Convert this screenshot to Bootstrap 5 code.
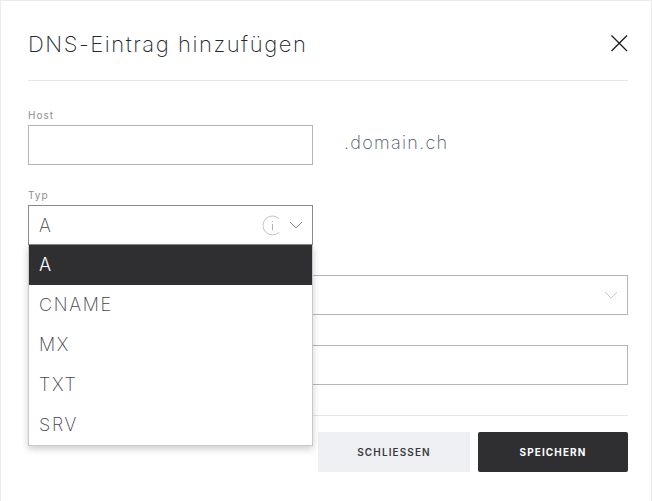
<!DOCTYPE html>
<html lang="de">
<head>
<meta charset="utf-8">
<title>DNS-Eintrag hinzufügen</title>
<link rel="stylesheet" href="https://cdn.jsdelivr.net/npm/bootstrap@5.3.0/dist/css/bootstrap.min.css">
<style>
html,body{height:100%;background:#fff;overflow:hidden}
body{font-family:Inter,"Liberation Sans",sans-serif;font-weight:300;color:#3a3a3d}
.dlg{height:501px;width:652px;border:solid #ebebeb;border-width:1px 1px 0 1px;padding:0 23px 0 27px}
.dlg-head{height:80px;border-bottom:1px solid #e6e6e6}
.dlg-title{font-size:22px;font-weight:200;letter-spacing:1.55px;color:#23262c;margin:7px 0 0;line-height:1.2}
.dlg-close{width:18px;height:18px;padding:0;border:0;background:none;display:block;margin-top:-4px}
.dlg-body{height:335px;border-bottom:1px solid #e6e6e6;position:relative;padding-top:29px}
.fld-label{display:block;font-size:10px;letter-spacing:1px;color:#8d8d8d;font-weight:400;height:15px;line-height:10px;margin:0}
.fld{height:40px;border:1px solid #b5b5b5;border-radius:0;background:#fff;box-shadow:none;padding:0 9px 0 10px}
.fld-narrow{width:285px}
.group-host{margin-bottom:25px}
.group-plain{margin-bottom:15px}
.domain-text{font-size:18px;font-weight:200;letter-spacing:1.3px;color:#4a5560;margin-left:31px;margin-top:-6px}
.sel-open{border-color:#8a8a8a;font-size:18px;font-weight:200;color:#444}
.sel-value{padding-top:1px}
.info-icon{width:21px;height:21px;display:block;margin-right:6px}
.chev{width:14px;height:8px;display:block}
.opt-menu{position:absolute;left:0;top:164px;width:285px;min-width:0;padding:0;margin:0;display:block;border:1px solid #c9c9c9;border-top:0;border-radius:0;box-shadow:0 3px 7px rgba(0,0,0,.2);background:#fff}
.opt-menu .dropdown-item{height:40px;line-height:40px;padding:0 10px;font-size:18px;font-weight:200;letter-spacing:1.7px;color:#3f444c}
.opt-menu .dropdown-item.active{background:#2f2f31;color:#fff;font-weight:300}
.dlg-foot{padding-top:16px}
.act-btn{height:40px;border:0;border-radius:2px;font-size:10px;font-weight:700;letter-spacing:1.1px;padding:0}
.act-light{width:152px;background:#eff0f4;color:#3a3a3d;font-weight:600;border-radius:0}
.act-dark{width:150px;background:#2f2f31;color:#fff}
</style>
</head>
<body>
<div class="dlg">
  <div class="dlg-head d-flex align-items-center justify-content-between">
    <h1 class="dlg-title">DNS-Eintrag hinzufügen</h1>
    <button type="button" class="dlg-close" aria-label="Schliessen">
      <svg viewBox="0 0 18 18" width="18" height="18"><path d="M1.5 1.5 17 17M17 1.5 1.5 17" stroke="#1b1b1b" stroke-width="1.3" fill="none"/></svg>
    </button>
  </div>
  <div class="dlg-body">
    <div class="group-host">
      <label class="fld-label">Host</label>
      <div class="d-flex align-items-center">
        <div class="fld fld-narrow"></div>
        <span class="domain-text">.domain.ch</span>
      </div>
    </div>
    <div class="group-plain">
      <label class="fld-label">Typ</label>
      <div class="fld sel-open fld-narrow d-flex align-items-center">
        <span class="flex-grow-1 sel-value">A</span>
        <svg class="info-icon" viewBox="0 0 21 21"><path d="M17 3.6A9.5 9.5 0 1 0 17 17.4" stroke="#c4c4c4" fill="none" stroke-width="1"/><path d="M10.5 9V15.5M10.5 6V7" stroke="#b5b5b5" fill="none" stroke-width="1"/></svg>
        <svg class="chev" viewBox="0 0 14 8"><path d="M1 1 7 7 13 1" stroke="#8c8c8c" fill="none" stroke-width="1"/></svg>
      </div>
    </div>
    <div class="group-plain">
      <div class="fld-label"></div>
      <div class="fld d-flex align-items-center justify-content-end">
        <svg class="chev" viewBox="0 0 14 8"><path d="M1 1 7 7 13 1" stroke="#c9c9c9" fill="none" stroke-width="1"/></svg>
      </div>
    </div>
    <div>
      <div class="fld-label"></div>
      <div class="fld"></div>
    </div>
    <div class="dropdown-menu opt-menu">
      <a class="dropdown-item active" href="#">A</a>
      <a class="dropdown-item" href="#">CNAME</a>
      <a class="dropdown-item" href="#">MX</a>
      <a class="dropdown-item" href="#">TXT</a>
      <a class="dropdown-item" href="#">SRV</a>
    </div>
  </div>
  <div class="dlg-foot d-flex justify-content-end gap-2">
    <button type="button" class="btn act-btn act-light">SCHLIESSEN</button>
    <button type="button" class="btn act-btn act-dark">SPEICHERN</button>
  </div>
</div>
<script src="https://cdn.jsdelivr.net/npm/bootstrap@5.3.0/dist/js/bootstrap.bundle.min.js"></script>
</body>
</html>
